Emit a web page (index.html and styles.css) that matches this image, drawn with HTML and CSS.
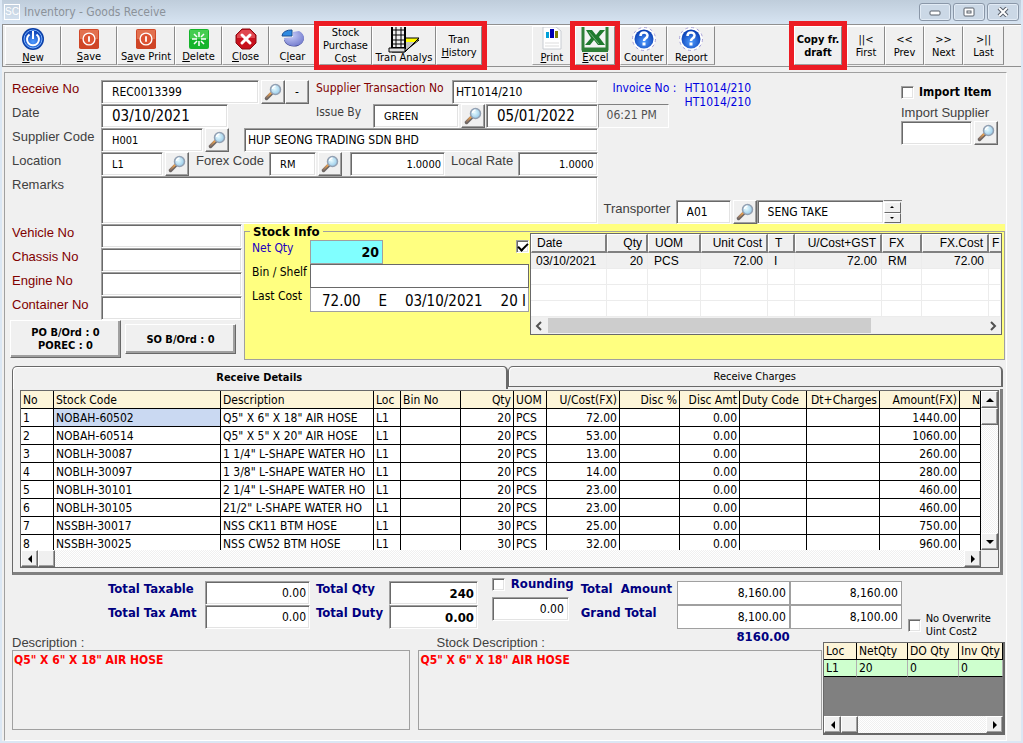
FILE: index.html
```html
<!DOCTYPE html>
<html lang="en">
<head>
    <meta charset="UTF-8">
    <meta name="viewport" content="width=device-width, initial-scale=1.0">
    <title>Inventory - Goods Receive</title>
    <link rel="stylesheet" href="styles.css">
</head>
<body>
    <svg class="sprite" aria-hidden="true">
        <defs>
            <linearGradient id="handle" x1="1" y1="0" x2="0" y2="1">
                <stop offset="0" stop-color="#f5a54a"/>
                <stop offset="1" stop-color="#8a7468"/>
            </linearGradient>
            <radialGradient id="lens" cx="0.4" cy="0.4" r="0.7">
                <stop offset="0" stop-color="#e8fbff"/>
                <stop offset="1" stop-color="#8cc4e6"/>
            </radialGradient>
            <radialGradient id="blue" cx="0.5" cy="0.65" r="0.6">
                <stop offset="0" stop-color="#4f9bff"/>
                <stop offset="1" stop-color="#0a3fb4"/>
            </radialGradient>
            <radialGradient id="pie" cx="0.35" cy="0.3" r="0.8">
                <stop offset="0" stop-color="#c9cdf8"/>
                <stop offset="1" stop-color="#6f78cc"/>
            </radialGradient>
        </defs>
        <symbol id="find" viewBox="0 0 18 18">
            <path d="M7.500 10.500 L2.500 15.500" stroke="#6a6462" stroke-width="3.500" stroke-linecap="round"/>
            <path d="M7 10 L2.500 14.500" stroke="url(#handle)" stroke-width="2" stroke-linecap="round"/>
            <circle cx="11.500" cy="6.500" r="5" fill="url(#lens)" stroke="#93a0b2" stroke-width="1.500"/>
            <path d="M8.500 6 A3.500 3.500 0 0 1 11.500 3" fill="none" stroke="#fff" stroke-width="1.500"/>
        </symbol>
        <symbol id="power" viewBox="0 0 22 22">
            <rect width="22" height="22" rx="2" fill="#cf4526"/>
            <rect x="1" y="1" width="20" height="10" fill="#e2714f"/>
            <circle cx="11" cy="11" r="6.500" fill="#dd5433" stroke="#fff" stroke-width="1.500"/>
            <path d="M11 8 V14" stroke="#fff" stroke-width="2"/>
        </symbol>
        <symbol id="help" viewBox="0 0 26 24">
            <circle cx="13" cy="12" r="11.500" fill="#fff" stroke="#a8a2d8" stroke-dasharray="3 3"/>
            <circle cx="13" cy="12" r="9.500" fill="url(#blue)"/>
            <path d="M9.500 9 C9.500 4.500 16.500 4.500 16.500 8.500 C16.500 11.500 13 11 13 14" fill="none" stroke="#fff" stroke-width="2.500"/>
            <rect x="11.500" y="15.500" width="3" height="3" fill="#fff"/>
        </symbol>
    </svg>

    <div class="window">
        <header class="titlebar">
            <span class="app-icon">SC</span>
            <h1>Inventory - Goods Receive</h1>
            <div class="window-buttons">
                <button type="button" aria-label="Minimize"><svg width="12" height="10"><rect x="1" y="4" width="10" height="4" rx="1" fill="#fff" stroke="#59606b"/></svg></button>
                <button type="button" aria-label="Restore"><svg width="12" height="10"><rect x="1" y="1" width="10" height="8" rx="1" fill="#fff" stroke="#59606b"/><rect x="4" y="4" width="4" height="2" fill="#fff" stroke="#59606b"/></svg></button>
                <button type="button" aria-label="Close window"><svg width="12" height="10"><path d="M2 1 L10 9 M10 1 L2 9" stroke="#59606b" stroke-width="4"/><path d="M2 1 L10 9 M10 1 L2 9" stroke="#fff" stroke-width="2"/></svg></button>
            </div>
        </header>

        <nav class="toolbar">
            <button type="button" class="tool w56">
                <svg width="24" height="24" viewBox="0 0 24 24"><circle cx="12" cy="12" r="11" fill="#0a3fa8"/><circle cx="12" cy="12" r="9" fill="url(#blue)" stroke="#7db4ff"/><path d="M8.500 7.500 A6 6 0 1 0 15.500 7.500" fill="none" stroke="#fff" stroke-width="2"/><path d="M12 4 V12" stroke="#fff" stroke-width="2"/></svg>
                <span><u>N</u>ew</span>
            </button>
            <button type="button" class="tool w56">
                <svg width="20" height="22"><use href="#power"/></svg>
                <span><u>S</u>ave</span>
            </button>
            <button type="button" class="tool w58">
                <svg width="20" height="22"><use href="#power"/></svg>
                <span>S<u>a</u>ve Print</span>
            </button>
            <button type="button" class="tool w47">
                <svg width="20" height="22" viewBox="0 0 20 20"><rect width="20" height="20" rx="2" fill="#16b52c"/><rect x="1" y="1" width="18" height="9" fill="#45cc50"/><path d="M10 3 V8 M10 12 V17 M3 10 H8 M12 10 H17 M5 5 L8 8 M12 12 L15 15 M15 5 L12 8 M8 12 L5 15" stroke="#fff" stroke-width="1.500"/></svg>
                <span><u>D</u>elete</span>
            </button>
            <button type="button" class="tool w47">
                <svg width="22" height="22" viewBox="0 0 22 22"><path d="M7 1 H15 L21 7 V15 L15 21 H7 L1 15 V7 Z" fill="#c8101c" stroke="#8a0c12"/><path d="M7 2 H15 L20 7 V10 H2 V7 Z" fill="#e04850"/><path d="M7 7 L15 15 M15 7 L7 15" stroke="#fff" stroke-width="3" stroke-linecap="round"/></svg>
                <span><u>C</u>lose</span>
            </button>
            <button type="button" class="tool w47">
                <svg width="24" height="22" viewBox="0 0 24 22"><path d="M12 5 L20 5 A10 8 0 1 1 3 12 L12 11 Z" fill="#3f4690"/><path d="M12 4 L18 3 A10 8 0 1 1 3 10 L12 9 Z" fill="url(#pie)"/><path d="M1 8 A9 6 0 0 1 11 2 L11 8 Z" fill="#2f8ae0" stroke="#1c4f94"/></svg>
                <span>C<u>l</u>ear</span>
            </button>
            <div class="marked tools-group">
                <button type="button" class="tool w53"><span>Stock<br>Purchase<br>Cost</span></button>
                <button type="button" class="tool w64 big-icon">
                    <svg width="32" height="27" viewBox="0 0 32 27"><path d="M10 14 H31 L16 26 H4 Z" fill="#c4c4c4" stroke="#000"/><path d="M18 12 H31 L28 16 H18 Z" fill="#ff0"/><path d="M18 12 H31 L17 26" fill="none" stroke="#000"/><rect x="4" y="0" width="13" height="22" fill="#eee" stroke="#000" stroke-width="2"/><path d="M8 0 V21 M13 0 V21 M5 4 H16 M5 9 H16 M5 14 H16 M5 18 H16" stroke="#000"/><path d="M1 22 H17 V26 H1 Z" fill="#ddd" stroke="#000"/></svg>
                    <span>Tran Analys</span>
                </button>
                <button type="button" class="tool w46"><span>Tran<br><u>H</u>istory</span></button>
            </div>
            <div class="spacer-a"></div>
            <button type="button" class="tool w39">
                <svg width="20" height="24" viewBox="0 0 20 24"><path d="M1 0 H14 L19 4 V22 H1 Z" fill="#fff" stroke="#c8ccd2"/><path d="M3 16 H17 M3 19 H17" stroke="#ddd"/><rect x="4" y="5" width="3" height="6" fill="#00a0d8"/><rect x="8" y="2" width="4" height="9" fill="#0000b0"/><rect x="13" y="4" width="3" height="7" fill="#808000"/></svg>
                <span><u>P</u>rint</span>
            </button>
            <div class="marked">
                <button type="button" class="tool w40 big-icon">
                    <svg width="28" height="26" viewBox="0 0 28 26"><rect x="2" y="-2" width="24" height="24" fill="#f4f4f4" stroke="#2f8038" stroke-width="3"/><path d="M1 22 H27 V25 H1 Z" fill="#2f8038"/><path d="M5 3 H11 L15 8 L19 3 H24 L18 10 L24 18 H17 L13 13 L9 18 H4 L10 11 Z" fill="#1f7a2e"/><path d="M8 5 L18 17" stroke="#6fb078" stroke-width="1"/></svg>
                    <span><u>E</u>xcel</span>
                </button>
            </div>
            <button type="button" class="tool w47">
                <svg width="28" height="24"><use href="#help"/></svg>
                <span>Counter</span>
            </button>
            <button type="button" class="tool w48">
                <svg width="28" height="24"><use href="#help"/></svg>
                <span>Report</span>
            </button>
            <div class="spacer-b"></div>
            <div class="marked">
                <button type="button" class="tool w48"><b>Copy fr.<br>draft</b></button>
            </div>
            <button type="button" class="tool w38"><span>||&lt;<br>First</span></button>
            <button type="button" class="tool w39"><span>&lt;&lt;<br>Prev</span></button>
            <button type="button" class="tool w39"><span>&gt;&gt;<br>Next</span></button>
            <button type="button" class="tool w41"><span>&gt;||<br>Last</span></button>
        </nav>

        <main class="panel">
            <section class="head">
                <div class="head-main">
                    <div class="row">
                        <label class="lbl req" for="receiveNo">Receive No</label>
                        <input class="w158 indent" id="receiveNo" value="REC0013399">
                        <button type="button" class="btn" aria-label="Find receive no"><svg><use href="#find"/></svg></button>
                        <button type="button" class="btn joined">-</button>
                        <label class="lbl2 w136 req tah" for="supTrans">Supplier Transaction No</label>
                        <input class="grow" id="supTrans" value="HT1014/210">
                    </div>
                    <div class="row">
                        <label class="lbl" for="date">Date</label>
                        <input class="w127 indent large" id="date" value="03/10/2021">
                        <label class="lbl2 issue tah" for="issueBy">Issue By</label>
                        <input class="w86 indent small" id="issueBy" value="GREEN">
                        <button type="button" class="btn" aria-label="Find issuer"><svg><use href="#find"/></svg></button>
                        <input class="grow indent large" aria-label="Issue date" value="05/01/2022">
                    </div>
                    <div class="row">
                        <label class="lbl" for="supCode">Supplier Code</label>
                        <input class="w102 indent small" id="supCode" value="H001">
                        <button type="button" class="btn" aria-label="Find supplier"><svg><use href="#find"/></svg></button>
                        <input class="grow supplier-name" aria-label="Supplier name" value="HUP SEONG TRADING SDN BHD">
                    </div>
                    <div class="row">
                        <label class="lbl" for="location">Location</label>
                        <input class="w62 indent small" id="location" value="L1">
                        <button type="button" class="btn" aria-label="Find location"><svg><use href="#find"/></svg></button>
                        <label class="lbl2 w73" for="forex">Forex Code</label>
                        <input class="w47 indent small" id="forex" value="RM">
                        <button type="button" class="btn" aria-label="Find currency"><svg><use href="#find"/></svg></button>
                        <input class="w95 num small forex-rate" aria-label="Forex rate" value="1.0000">
                        <label class="lbl2 w67" for="localRate">Local Rate</label>
                        <input class="grow num small" id="localRate" value="1.0000">
                    </div>
                    <div class="row tall">
                        <label class="lbl" for="remarks">Remarks</label>
                        <textarea class="grow" id="remarks"></textarea>
                    </div>
                </div>

                <div class="head-side">
                    <div class="side-top">
                        <div class="invoice">
                            <span class="invoice-label">Invoice No :</span>
                            <span class="invoice-no">HT1014/210<br>HT1014/210</span>
                            <output class="time">06:21 PM</output>
                        </div>
                        <div class="import">
                            <label class="import-item"><input type="checkbox"> <b>Import Item</b></label>
                            <label class="import-label" for="importSup">Import Supplier</label>
                            <div class="row">
                                <input class="grow" id="importSup">
                                <button type="button" class="btn" aria-label="Find import supplier"><svg><use href="#find"/></svg></button>
                            </div>
                        </div>
                    </div>
                    <div class="row transporter">
                        <label class="lbl2 w72" for="transporter">Transporter</label>
                        <input class="w55 indent" id="transporter" value="A01">
                        <button type="button" class="btn" aria-label="Find transporter"><svg><use href="#find"/></svg></button>
                        <div class="spin">
                            <input class="indent" aria-label="Transporter name" value="SENG TAKE">
                            <div class="spin-buttons">
                                <button type="button" aria-label="Previous transporter"><i class="up"></i></button>
                                <button type="button" aria-label="Next transporter"><i class="down"></i></button>
                            </div>
                        </div>
                    </div>
                </div>
            </section>

            <section class="middle">
                <div class="vehicle">
                    <div class="row"><label class="lbl req" for="vehicle">Vehicle No</label><input class="grow" id="vehicle"></div>
                    <div class="row"><label class="lbl req" for="chassis">Chassis No</label><input class="grow" id="chassis"></div>
                    <div class="row"><label class="lbl req" for="engine">Engine No</label><input class="grow" id="engine"></div>
                    <div class="row"><label class="lbl req" for="container">Container No</label><input class="grow" id="container"></div>
                    <div class="order-buttons">
                        <button type="button" class="order">PO B/Ord : 0<br>POREC : 0</button>
                        <button type="button" class="order">SO B/Ord : 0</button>
                    </div>
                </div>

                <div class="stock-wrap">
                    <fieldset class="stock">
                        <legend>Stock Info</legend>
                        <div class="stock-body">
                            <div class="stock-fields">
                                <label class="net" for="netQty">Net Qty</label>
                                <div class="net-row">
                                    <input class="net-qty num" id="netQty" value="20">
                                    <input type="checkbox" aria-label="Show history" checked>
                                </div>
                                <label for="bin">Bin / Shelf</label>
                                <input class="bin" id="bin">
                                <span>Last Cost</span>
                                <div class="last-cost"><span>72.00</span><span>E</span><span>03/10/2021</span><span>20 I</span></div>
                            </div>
                            <div class="history">
                                <table>
                                    <colgroup><col class="w76"><col class="w41"><col class="w53"><col class="w67"><col class="w27"><col class="w87"><col class="w40"><col class="w67"><col></colgroup>
                                    <thead>
                                        <tr><th>Date</th><th class="num">Qty</th><th>UOM</th><th class="num">Unit Cost</th><th>T</th><th class="num">U/Cost+GST</th><th>FX</th><th class="num">FX.Cost</th><th>F</th></tr>
                                    </thead>
                                    <tbody>
                                        <tr class="selected"><td>03/10/2021</td><td class="num">20</td><td>PCS</td><td class="num">72.00</td><td>I</td><td class="num">72.00</td><td>RM</td><td class="num">72.00</td><td></td></tr>
                                        <tr><td></td><td></td><td></td><td></td><td></td><td></td><td></td><td></td><td></td></tr>
                                        <tr><td></td><td></td><td></td><td></td><td></td><td></td><td></td><td></td><td></td></tr>
                                        <tr><td></td><td></td><td></td><td></td><td></td><td></td><td></td><td></td><td></td></tr>
                                    </tbody>
                                </table>
                                <div class="flat-scroll">
                                    <svg width="8" height="10"><path d="M6 1 L2 5 L6 9" fill="none" stroke="#505050" stroke-width="2"/></svg>
                                    <div class="track"><div class="flat-thumb"></div></div>
                                    <svg width="8" height="10"><path d="M2 1 L6 5 L2 9" fill="none" stroke="#505050" stroke-width="2"/></svg>
                                </div>
                            </div>
                        </div>
                    </fieldset>
                </div>
            </section>

            <section class="tabs">
                <div class="tab-bar" role="tablist">
                    <button type="button" role="tab" class="tab active" aria-selected="true">Receive Details</button>
                    <button type="button" role="tab" class="tab" aria-selected="false">Receive Charges</button>
                </div>
                <div class="tab-page">
                    <div class="details">
                        <div class="details-view">
                            <table>
                                <colgroup><col class="w33"><col class="w167"><col class="w153"><col class="w27"><col class="w60"><col class="w53"><col class="w33"><col class="w73"><col class="w60"><col class="w60"><col class="w67"><col class="w73"><col class="w80"><col></colgroup>
                                <thead>
                                    <tr><th>No</th><th>Stock Code</th><th>Description</th><th>Loc</th><th>Bin No</th><th class="num">Qty</th><th>UOM</th><th class="num">U/Cost(FX)</th><th class="num">Disc %</th><th class="num">Disc Amt</th><th>Duty Code</th><th class="num">Dt+Charges</th><th class="num">Amount(FX)</th><th class="next">N</th></tr>
                                </thead>
                                <tbody>
                                    <tr><td>1</td><td class="current">NOBAH-60502</td><td>Q5" X 6" X 18" AIR HOSE</td><td>L1</td><td></td><td class="num">20</td><td>PCS</td><td class="num">72.00</td><td></td><td class="num">0.00</td><td></td><td></td><td class="num">1440.00</td><td></td></tr>
                                    <tr><td>2</td><td>NOBAH-60514</td><td>Q5" X 5" X 20" AIR HOSE</td><td>L1</td><td></td><td class="num">20</td><td>PCS</td><td class="num">53.00</td><td></td><td class="num">0.00</td><td></td><td></td><td class="num">1060.00</td><td></td></tr>
                                    <tr><td>3</td><td>NOBLH-30087</td><td>1 1/4" L-SHAPE WATER HO</td><td>L1</td><td></td><td class="num">20</td><td>PCS</td><td class="num">13.00</td><td></td><td class="num">0.00</td><td></td><td></td><td class="num">260.00</td><td></td></tr>
                                    <tr><td>4</td><td>NOBLH-30097</td><td>1 3/8" L-SHAPE WATER HO</td><td>L1</td><td></td><td class="num">20</td><td>PCS</td><td class="num">14.00</td><td></td><td class="num">0.00</td><td></td><td></td><td class="num">280.00</td><td></td></tr>
                                    <tr><td>5</td><td>NOBLH-30101</td><td>2 1/4" L-SHAPE WATER HO</td><td>L1</td><td></td><td class="num">20</td><td>PCS</td><td class="num">23.00</td><td></td><td class="num">0.00</td><td></td><td></td><td class="num">460.00</td><td></td></tr>
                                    <tr><td>6</td><td>NOBLH-30105</td><td>21/2" L-SHAPE WATER HO</td><td>L1</td><td></td><td class="num">20</td><td>PCS</td><td class="num">23.00</td><td></td><td class="num">0.00</td><td></td><td></td><td class="num">460.00</td><td></td></tr>
                                    <tr><td>7</td><td>NSSBH-30017</td><td>NSS CK11 BTM HOSE</td><td>L1</td><td></td><td class="num">30</td><td>PCS</td><td class="num">25.00</td><td></td><td class="num">0.00</td><td></td><td></td><td class="num">750.00</td><td></td></tr>
                                    <tr><td>8</td><td>NSSBH-30025</td><td>NSS CW52 BTM HOSE</td><td>L1</td><td></td><td class="num">30</td><td>PCS</td><td class="num">32.00</td><td></td><td class="num">0.00</td><td></td><td></td><td class="num">960.00</td><td></td></tr>
                                </tbody>
                            </table>
                        </div>
                        <div class="scroll vertical">
                            <button type="button" aria-label="Scroll up"><i class="up"></i></button>
                            <span class="thumb"></span>
                            <button type="button" class="end" aria-label="Scroll down"><i class="down"></i></button>
                        </div>
                        <div class="scroll">
                            <button type="button" aria-label="Scroll left"><i class="left"></i></button>
                            <span class="thumb"></span>
                            <button type="button" class="end" aria-label="Scroll right"><i class="right"></i></button>
                        </div>
                    </div>
                </div>
            </section>

            <section class="totals">
                <div class="total-grid taxes">
                    <label for="taxable">Total Taxable</label><input class="num" id="taxable" value="0.00">
                    <label for="taxAmt">Total Tax Amt</label><input class="num" id="taxAmt" value="0.00">
                </div>
                <div class="total-grid quantities">
                    <label for="totalQty">Total Qty</label><input class="num strong" id="totalQty" value="240">
                    <label for="totalDuty">Total Duty</label><input class="num strong" id="totalDuty" value="0.00">
                </div>
                <div class="rounding">
                    <label><input type="checkbox"> Rounding</label>
                    <input class="num" aria-label="Rounding amount" value="0.00">
                </div>
                <div class="total-grid amounts">
                    <label for="amount">Total&nbsp; Amount</label><input class="num" id="amount" value="8,160.00"><input class="num" aria-label="Total amount local" value="8,160.00">
                    <label for="grand">Grand Total</label><input class="num" id="grand" value="8,100.00"><input class="num" aria-label="Grand total local" value="8,100.00">
                    <output class="sum">8160.00</output>
                </div>
                <label class="overwrite"><input type="checkbox"> <span>No Overwrite<br>Uint Cost2</span></label>
            </section>

            <section class="bottom">
                <div class="desc">
                    <h2>Description :</h2>
                    <div class="desc-box">Q5" X 6" X 18" AIR HOSE</div>
                </div>
                <div class="desc">
                    <h2 class="shifted">Stock Description :</h2>
                    <div class="desc-box">Q5" X 6" X 18" AIR HOSE</div>
                </div>
                <div class="qty-grid">
                    <table>
                        <colgroup><col class="w33"><col class="w51"><col class="w51"><col></colgroup>
                        <thead><tr><th>Loc</th><th>NetQty</th><th>DO Qty</th><th>Inv Qty</th></tr></thead>
                        <tbody><tr><td>L1</td><td>20</td><td>0</td><td>0</td></tr></tbody>
                    </table>
                    <div class="scroll">
                        <button type="button" aria-label="Scroll left"><i class="left"></i></button>
                        <span class="thumb"></span>
                        <button type="button" class="end" aria-label="Scroll right"><i class="right"></i></button>
                    </div>
                </div>
            </section>
        </main>
    </div>
</body>
</html>
```
FILE: styles.css
```css
* {
    box-sizing: border-box;
}
body {
    margin: 0;
    background: #d9e5f2;
    color: #000;
    font-family: "DejaVu Sans Condensed", "Noto Sans", sans-serif;
    font-size: 12px;
    line-height: 14px;
}
button, input, textarea {
    font: inherit;
    color: inherit;
    margin: 0;
    border-radius: 0;
}
button {
    padding: 0;
    background: #f0f0f0;
}
h1, h2 {
    margin: 0;
    font-weight: normal;
}
table {
    width: 100%;
    border-collapse: separate;
    border-spacing: 0;
    table-layout: fixed;
}
th, td {
    font-weight: normal;
    text-align: left;
    white-space: nowrap;
    overflow: hidden;
    padding: 0;
}
.num {
    text-align: right;
}
.sprite {
    display: block;
    width: 0;
    height: 0;
}

/* window frame */
.window {
    display: flex;
    flex-direction: column;
    min-height: 100vh;
    border: solid #dbe7f4;
    border-width: 0 2px 2px;
    background: #f0f0f0;
}
.titlebar {
    display: flex;
    align-items: center;
    gap: 4px;
    height: 24px;
    padding: 0 2px;
    background: linear-gradient(#bfcddb, #d7e4f2);
}
.titlebar h1 {
    flex: 1;
    color: #8b929a;
    font-size: 12px;
}
.app-icon {
    width: 16px;
    border: 1px solid #fff;
    color: #fff;
    font: 10px/14px "Liberation Sans", sans-serif;
    text-align: center;
}
.window-buttons {
    display: flex;
    gap: 2px;
}
.window-buttons button {
    display: flex;
    align-items: center;
    justify-content: center;
    width: 32px;
    height: 18px;
    border: 1px solid #8a97a8;
    border-radius: 3px;
    background: #cbd8e6;
    box-shadow: inset 0 0 0 1px #e2ebf5;
}

/* toolbar */
.toolbar {
    display: flex;
    height: 43px;
    padding: 1px 17px 1px 2px;
    border: 1px solid #909090;
    border-width: 1px 0 1px 1px;
    background: #f0f0f0;
    box-shadow: inset 0 1px #fff;
}
.tool {
    display: flex;
    flex-direction: column;
    align-items: center;
    justify-content: center;
    height: 39px;
    overflow: hidden;
    border: 1px solid;
    border-color: #fff #8a8a8a #a0a0a0 #fff;
    font-size: 11px;
    line-height: 13px;
    white-space: nowrap;
}
.tool svg {
    flex: none;
    margin-top: -1px;
}
.big-icon svg {
    margin-bottom: -2px;
}
.marked {
    display: flex;
    position: relative;
    outline: 5px solid #ec1c24;
    margin: 0 5px 0 4px;
}
.tools-group {
    margin-left: 3px;
}
.spacer-a {
    flex: 45 1 0;
}
.spacer-b {
    flex: 74 1 0;
}

/* form controls */
.panel {
    flex: 1;
    margin: 5px 14px 0 2px;
    padding: 7px 1px 4px 5px;
    border: 1px solid;
    border-color: #a0a0a0 #fff #fff #a0a0a0;
}
.row {
    display: flex;
    height: 24px;
}
.tall {
    height: 48px;
}
.grow {
    flex: 1;
    min-width: 0;
}
input, textarea {
    min-width: 0;
    height: 24px;
    padding: 0 3px;
    border: 1px solid;
    border-color: #a0a0a0 #fff #fff #a0a0a0;
    outline: none;
    background: #fff;
    box-shadow: inset 1px 1px #696969, inset -1px -1px #e3e3e3;
}
textarea {
    height: 48px;
    resize: none;
}
.indent {
    padding-left: 10px;
}
.large {
    font-size: 15px;
}
.small {
    font-size: 11px;
}
.lbl, .lbl2, .import-label {
    flex: none;
    color: #404040;
    font: 13px/17px "Liberation Sans", sans-serif;
    white-space: nowrap;
}
.lbl {
    width: 91px;
    padding-left: 2px;
}
.lbl2 {
    margin-left: 6px;
}
.tah {
    font: 12px/17px "DejaVu Sans Condensed", sans-serif;
}
.lbl.req, .lbl2.req {
    color: #800000;
}
.btn {
    flex: none;
    display: flex;
    align-items: center;
    justify-content: center;
    width: 24px;
    height: 24px;
    margin: 0 1px 0 2px;
    border: 1px solid;
    border-color: #fff #696969 #696969 #fff;
    box-shadow: inset -1px -1px #a0a0a0;
}
.btn svg {
    width: 18px;
    height: 18px;
}
.joined {
    margin-left: -1px;
}
.issue {
    width: 57px;
    margin-left: 88px;
}
input[type="checkbox"] {
    flex: none;
    display: grid;
    place-items: center;
    appearance: none;
    width: 13px;
    height: 13px;
    padding: 0;
}
input[type="checkbox"]:checked::after {
    content: "";
    width: 8px;
    height: 4px;
    border: solid #000;
    border-width: 0 0 2px 2px;
    transform: translateY(-1px) rotate(-45deg);
}

/* header */
.head {
    display: grid;
    grid-template-columns: minmax(0, 587fr) minmax(0, 407fr);
}
.supplier-name {
    margin-left: 14px;
}
.forex-rate {
    margin-left: 7px;
}
.head-side {
    display: flex;
    flex-direction: column;
    justify-content: space-between;
}
.side-top {
    display: flex;
    justify-content: space-between;
}
.invoice {
    display: grid;
    grid-template: 24px 24px / 87px auto;
    color: #0000e0;
}
.invoice-label {
    padding: 1px 0 0 15px;
    white-space: nowrap;
}
.invoice-no {
    grid-row: span 2;
    padding-top: 1px;
}
.time {
    width: 71px;
    padding: 3px 8px;
    border: 1px solid;
    border-color: #808080 #fff #fff #a0a0a0;
    color: #505050;
    white-space: nowrap;
}
.import {
    width: 104px;
    padding-top: 5px;
}
.import-item {
    display: flex;
    align-items: center;
    gap: 5px;
    height: 14px;
    white-space: nowrap;
}
.import-label {
    display: block;
    padding-top: 5px;
}
.import .row {
    padding-right: 6px;
}
.transporter .btn {
    margin-right: 0;
}
.spin {
    display: flex;
    width: 145px;
}
.spin input {
    flex: 1;
}
.spin-buttons {
    display: flex;
    flex-direction: column;
    width: 18px;
    padding: 1px 1px 1px 0;
    border-top: 1px solid #808080;
}
.spin-buttons button {
    display: grid;
    place-items: center;
    flex: 1;
    border: 1px solid;
    border-color: #fff #696969 #696969 #fff;
}
.spin-buttons i {
    transform: scale(0.5);
}

/* vehicle and stock info */
.middle {
    display: flex;
}
.vehicle {
    width: 234px;
    padding-right: 2px;
}
.order-buttons {
    display: grid;
    grid-template-columns: 1fr 1fr;
    align-items: center;
    gap: 4px;
    padding-right: 6px;
}
.order {
    height: 38px;
    border: 1px solid;
    border-color: #fff #696969 #696969 #fff;
    box-shadow: inset -2px -2px #a0a0a0;
    font-size: 11px;
    font-weight: bold;
    line-height: 13px;
}
.order + .order {
    height: 30px;
}
.stock-wrap {
    flex: 1;
    min-width: 0;
    height: 136px;
    background: #ffff80;
}
.stock {
    min-width: 0;
    height: 136px;
    margin: 0;
    padding: 0;
    border: 1px solid #a0a0a0;
}
.stock legend {
    margin-left: 5px;
    padding: 0 3px;
    font-size: 13px;
    font-weight: bold;
    line-height: 15px;
}
.stock-body {
    display: flex;
    gap: 1px;
    padding: 1px 2px 0 7px;
}
.stock-fields {
    flex: none;
    display: grid;
    grid-template: repeat(3, 24px) / 58px 219px;
    line-height: 16px;
    white-space: nowrap;
}
.net {
    color: #2000c0;
}
.net-row {
    display: flex;
    justify-content: space-between;
}
.net-qty {
    width: 73px;
    background: #80ffff;
    font-size: 14px;
    font-weight: bold;
    box-shadow: none;
    border-color: #a0a0a0;
}
.bin {
    border-color: #696969;
    box-shadow: none;
}
.last-cost {
    display: flex;
    justify-content: space-between;
    padding: 5px 2px 0 11px;
    border: 1px solid #a0a0a0;
    border-top: 0;
    background: #fff;
    font-size: 15px;
}
.history {
    flex: 1;
    min-width: 0;
    height: 102px;
    margin-top: -7px;
    border: 1px solid #696969;
    background: #fff;
    font-family: "Liberation Sans", sans-serif;
}
.history th {
    height: 19px;
    padding: 0 6px;
    border: solid;
    border-width: 1px 2px 2px 1px;
    border-color: #fff #808080 #808080 #fff;
    background: #f0f0f0;
}
.history th:first-child, .history td:first-child {
    padding-left: 5px;
}
.history th.num, .history td.num {
    padding: 0 4px 0 0;
}
.history td {
    height: 16px;
    padding: 0 6px;
    border: solid #ececec;
    border-width: 0 1px 1px 0;
    line-height: 14px;
}
.history th:last-child {
    padding: 0 0 0 2px;
    border-right: 0;
}
.history td:last-child {
    padding: 0;
}
.selected {
    background: #f0f0f0;
}
.flat-scroll {
    display: flex;
    align-items: center;
    gap: 5px;
    height: 17px;
    padding: 0 4px;
    background: #f0f0f0;
}
.track {
    flex: 1;
}
.flat-thumb {
    width: 74%;
    height: 15px;
    background: #cdcdcd;
}

/* tabs and detail grid */
.tabs {
    margin: 6px 2px 0;
}
.tab-bar {
    display: grid;
    grid-template-columns: 1fr 1fr;
}
.tab {
    height: 21px;
    border: 1px solid #696969;
    border-right-width: 2px;
    border-radius: 5px 5px 0 0;
    box-shadow: inset 1px 1px #fff;
    font-size: 11px;
}
.tab.active {
    height: 23px;
    border-bottom: 0;
    font-weight: bold;
}
.tab-page {
    padding: 1px 1px 4px 7px;
    border: solid;
    border-width: 0 3px 3px 1px;
    border-color: #696969 #808080 #808080 #696969;
}
.details {
    display: grid;
    grid-template: 159px 17px / minmax(0, 1fr) 17px;
    border: 1px solid #696969;
    background: #f0f0f0;
}
.details-view {
    overflow: hidden;
    background: #fff;
}
.details th, .details td {
    height: 18px;
    padding: 2px 2px 0;
    border: solid #000;
    border-width: 0 1px 1px 0;
    line-height: 15px;
}
.details th {
    background: #fdf5d9;
}
.details .next {
    padding: 2px 0 0;
    text-align: right;
}
.details .current {
    background: #cad9f2;
}
.scroll {
    display: flex;
    height: 17px;
    background: repeating-conic-gradient(#fff 0 25%, #f0f0f0 0 50%) 0 0 / 2px 2px;
}
.vertical {
    flex-direction: column;
    height: auto;
}
.scroll button, .thumb {
    display: grid;
    place-items: center;
    width: 17px;
    height: 17px;
    border: 1px solid;
    border-color: #fff #696969 #696969 #fff;
    background: #f0f0f0;
    box-shadow: inset -1px -1px #a0a0a0;
}
.scroll .end {
    margin-left: auto;
}
.vertical .end {
    margin: auto 0 0;
}
.up, .down {
    border: solid transparent;
    border-width: 0 4px;
}
.left, .right {
    border: solid transparent;
    border-width: 4px 0;
}
.up {
    border-bottom: 4px solid #000;
}
.down {
    border-top: 4px solid #000;
}
.left {
    border-right: 4px solid #000;
}
.right {
    border-left: 4px solid #000;
}

/* totals */
.totals {
    display: flex;
    justify-content: space-between;
    height: 71px;
    padding-right: 14px;
    padding-left: 98px;
    color: #000080;
    font-size: 13px;
    font-weight: bold;
    white-space: nowrap;
}
.totals input {
    color: #000;
    font-size: 12px;
    font-weight: normal;
}
.totals .strong {
    font-size: 13px;
    font-weight: bold;
}
.total-grid {
    display: grid;
    grid-auto-rows: 24px;
    padding-top: 6px;
    line-height: 16px;
}
.taxes {
    grid-template-columns: 97px 105px;
}
.quantities {
    grid-template-columns: 73px 89px;
}
.amounts {
    grid-template-columns: 96px 113px 112px;
}
.amounts input {
    border-color: #a0a0a0;
    box-shadow: none;
}
.sum {
    grid-column: 2;
    text-align: right;
}
.rounding {
    width: 83px;
    padding-top: 2px;
    margin-left: 8px;
}
.rounding label {
    display: flex;
    align-items: center;
    gap: 6px;
    height: 14px;
}
.rounding > input {
    width: 77px;
    margin-top: 6px;
    padding-right: 4px;
}
.overwrite {
    display: flex;
    align-items: center;
    align-self: flex-end;
    gap: 5px;
    padding-bottom: 8px;
    color: #000;
    font-size: 11px;
    font-weight: normal;
    line-height: 13px;
}

/* bottom */
.bottom {
    display: grid;
    grid-template-columns: 398fr 411fr 183px;
    margin: -10px 0 0 2px;
}
.desc + .desc {
    margin-left: 8px;
}
.desc h2 {
    color: #404040;
    font: 13px/14px "Liberation Sans", sans-serif;
}
.desc .shifted {
    padding-left: 18px;
}
.desc-box {
    height: 80px;
    padding: 2px 1px;
    border: 1px solid #a0a0a0;
    color: #f00;
    font-weight: bold;
}
.qty-grid {
    display: flex;
    flex-direction: column;
    justify-content: space-between;
    height: 93px;
    margin: 6px 0 0 1px;
    border: 1px solid #696969;
    border-width: 1px 2px 2px 1px;
    background: #808080;
}
.qty-grid th, .qty-grid td {
    height: 17px;
    padding: 0 2px;
    border: solid #000;
    border-width: 0 1px 1px 0;
    background: #fdf5d9;
    line-height: 16px;
}
.qty-grid td {
    border-right-color: #b0b0b0;
    background: #ceffce;
}

/* fixed widths */
.w27 { width: 27px; }
.w33 { width: 33px; }
.w38 { width: 38px; }
.w39 { width: 39px; }
.w40 { width: 40px; }
.w41 { width: 41px; }
.w46 { width: 46px; }
.w47 { width: 47px; }
.w48 { width: 48px; }
.w51 { width: 51px; }
.w53 { width: 53px; }
.w55 { width: 55px; }
.w56 { width: 56px; }
.w58 { width: 58px; }
.w60 { width: 60px; }
.w62 { width: 62px; }
.w64 { width: 64px; }
.w67 { width: 67px; }
.w72 { width: 72px; }
.w73 { width: 73px; }
.w76 { width: 76px; }
.w80 { width: 80px; }
.w86 { width: 86px; }
.w87 { width: 87px; }
.w95 { width: 95px; }
.w102 { width: 102px; }
.w127 { width: 127px; }
.w136 { width: 136px; }
.w153 { width: 153px; }
.w158 { width: 158px; }
.w167 { width: 167px; }
```
